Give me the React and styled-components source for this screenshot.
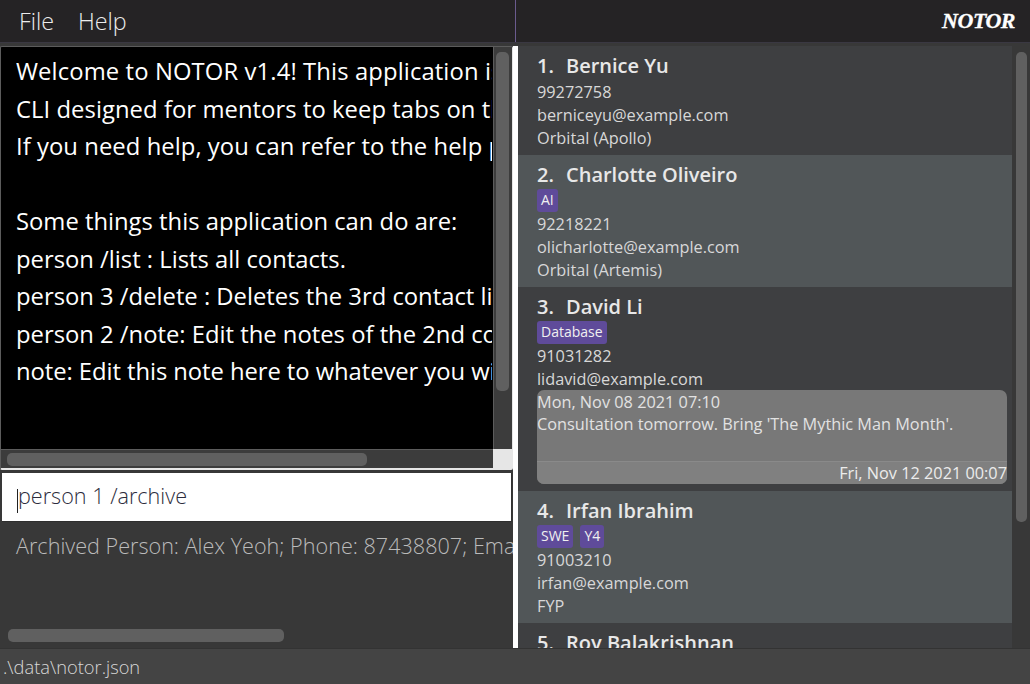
import React from 'react';
import styled, { createGlobalStyle } from 'styled-components';

const GlobalStyle = createGlobalStyle`
	html, body {
		margin: 0;
		padding: 0;
		background: #383838;
	}
`;

const persons = [
	{ index: '1.', name: 'Bernice Yu', phone: '99272758', email: 'berniceyu@example.com', group: 'Orbital (Apollo)', height: 109 },
	{ index: '2.', name: 'Charlotte Oliveiro', tags: ['AI'], phone: '92218221', email: 'olicharlotte@example.com', group: 'Orbital (Artemis)', height: 132 },
	{
		index: '3.', name: 'David Li', tags: ['Database'], phone: '91031282', email: 'lidavid@example.com', height: 204,
		note: { date: 'Mon, Nov 08 2021 07:10', text: "Consultation tomorrow. Bring 'The Mythic Man Month'.", updated: 'Fri, Nov 12 2021 00:07' }
	},
	{ index: '4.', name: 'Irfan Ibrahim', tags: ['SWE', 'Y4'], phone: '91003210', email: 'irfan@example.com', group: 'FYP', height: 132 },
	{ index: '5.', name: 'Roy Balakrishnan', height: 40 }
];

// spacing nudges each line so it gets clipped at the same letter as the reference
const welcome = [
	{ text: 'Welcome to NOTOR v1.4! This application is a CLI designed for mentors to keep tabs on their mentees.', spacing: 0.12 },
	{ text: 'CLI designed for mentors to keep tabs on their mentees and their progress in one application.', spacing: 0.06 },
	{ text: 'If you need help, you can refer to the help page by typing help into the command box.', spacing: 0.06 },
	{ text: '\u00a0' },
	{ text: 'Some things this application can do are:' },
	{ text: 'person /list : Lists all contacts.' },
	{ text: 'person 3 /delete : Deletes the 3rd contact listed in the application.' },
	{ text: 'person 2 /note: Edit the notes of the 2nd contact listed in the application.' },
	{ text: 'note: Edit this note here to whatever you wish to remember for yourself.', spacing: -0.06 }
];

function App() {
	return (
		<Page>
			<GlobalStyle />
			<TopBar>
				<Menu>
					<MenuItem>File</MenuItem>
					<MenuItem>Help</MenuItem>
				</Menu>
				<Brand>NOTOR</Brand>
			</TopBar>
			<Main>
				<LeftPane>
					<OutputBox>
						<OutputText>
							{welcome.map((line, i) => <OutputLine key={i} $spacing={line.spacing || 0}>{line.text}</OutputLine>)}
						</OutputText>
						<VTrack><VThumb $height={339} /></VTrack>
						<HTrack><HThumb $width={360} /></HTrack>
						<Corner />
					</OutputBox>
					<CommandBox>
						<Caret />
						<CommandText>person 1 /archive</CommandText>
					</CommandBox>
					<ResultBox>
						<ResultText>Archived Person: Alex Yeoh; Phone: 87438807; Email: alexyeoh@example.com</ResultText>
						<ResultThumb />
					</ResultBox>
				</LeftPane>
				<Splitter />
				<ListPane>
					<List>
						{persons.map((p, i) => (
							<Card key={p.name} $alt={i % 2 === 1} $height={p.height}>
								<Name><Index>{p.index}</Index>{p.name}</Name>
								{p.tags ? (
									<Tags>
										{p.tags.map(t => <Tag key={t}>{t}</Tag>)}
									</Tags>
								) : <NoTags />}
								{p.phone && <Field>{p.phone}</Field>}
								{p.email && <Field>{p.email}</Field>}
								{p.group && <Field>{p.group}</Field>}
								{p.note && (
									<Note>
										<NoteBody>
											<NoteLine>{p.note.date}</NoteLine>
											<NoteLine>{p.note.text}</NoteLine>
										</NoteBody>
										<NoteFooter>{p.note.updated}</NoteFooter>
									</Note>
								)}
							</Card>
						))}
					</List>
					<ListScroll><ListThumb /></ListScroll>
				</ListPane>
			</Main>
			<StatusBar>.\data\notor.json</StatusBar>
		</Page>
	);
}

const Page = styled.div`
	width: 1030px;
	height: 684px;
	display: flex;
	flex-direction: column;
	overflow: hidden;
	background: #383838;
	font-family: "Open Sans", "Noto Sans", sans-serif;
`;

const TopBar = styled.div`
	height: 43px;
	flex: none;
	display: flex;
	align-items: center;
	justify-content: space-between;
	background: #252325;
	box-sizing: border-box;
	border-bottom: 1px solid #3a3842;
	position: relative;

	&::after {
		content: '';
		position: absolute;
		left: 515px;
		top: 0;
		bottom: 0;
		width: 1px;
		background: #6b5b8e;
	}
`;

const Menu = styled.div`
	display: flex;
	gap: 24px;
	padding-left: 19px;
`;

const MenuItem = styled.span`
	color: #ececec;
	font-size: 23.3px;
	font-weight: 300;
`;

const Brand = styled.span`
	margin-right: 15px;
	color: #fff;
	font-family: "Liberation Serif", serif;
	font-style: italic;
	font-weight: 700;
	font-size: 22px;
	letter-spacing: -0.5px;
	-webkit-text-stroke: 0.3px #fff;
`;

const Main = styled.div`
	flex: 1;
	min-height: 0;
	display: flex;
	background: #383838;
	padding-top: 3px;
`;

const LeftPane = styled.div`
	width: 513px;
	flex: none;
	display: flex;
	flex-direction: column;
`;

const OutputBox = styled.div`
	height: 424px;
	flex: none;
	box-sizing: border-box;
	position: relative;
	border-left: 1px solid #5c5c5c;
	border-top: 1px solid #5c5c5c;
	border-bottom: 2px solid #e6e6e6;
	border-right: 1px solid #e6e6e6;
	border-radius: 2px;
	background: #383838;
	overflow: hidden;
`;

const OutputText = styled.div`
	height: 402px;
	width: 492px;
	box-sizing: border-box;
	padding: 6px 0 0 15px;
	background: #000;
	color: #fff;
	font-size: 23.8px;
	line-height: 37.5px;
	white-space: pre;
	overflow: hidden;
`;

const OutputLine = styled.div`
	width: 476px;
	overflow: hidden;
	letter-spacing: ${p => p.$spacing}px;
`;

const VTrack = styled.div`
	position: absolute;
	top: 0;
	right: 0;
	width: 19px;
	height: 402px;
	box-sizing: border-box;
	border-left: 1px solid #5c5c5c;
	background: #3c3c3c;
`;

const VThumb = styled.div`
	margin: 5px 3px 0 2px;
	height: ${p => p.$height}px;
	background: #606060;
	border-radius: 5px;
`;

const HTrack = styled.div`
	position: absolute;
	left: 0;
	bottom: 0;
	width: 492px;
	height: 19px;
	box-sizing: border-box;
	border-top: 1px solid #5c5c5c;
	background: #3c3c3c;
`;

const HThumb = styled.div`
	margin: 3px 6px;
	width: ${p => p.$width}px;
	height: 13px;
	background: #606060;
	border-radius: 5px;
`;

const Corner = styled.div`
	position: absolute;
	right: 0;
	bottom: 0;
	width: 19px;
	height: 19px;
	background: #e6e6e6;
`;

const CommandBox = styled.div`
	height: 49px;
	flex: none;
	margin: 3px 0 0 2px;
	width: 510px;
	box-sizing: border-box;
	display: flex;
	align-items: center;
	padding-left: 15px;
	background: #fff;
	border-right: 1px solid #333;
	border-bottom: 1px solid #2e2e2e;
`;

const CommandText = styled.span`
	margin-bottom: 4px;
	color: #2c2c3c;
	font-size: 21.6px;
	font-weight: 300;
	white-space: pre;
`;

const Caret = styled.span`
	width: 1px;
	height: 24px;
	margin-top: 7px;
	background: #222;
`;

const ResultBox = styled.div`
	flex: 1;
	position: relative;
	background: #383838;
	overflow: hidden;
	padding: 9px 0 0 16px;
`;

const ResultText = styled.div`
	color: #bbb;
	font-size: 21.6px;
	font-weight: 300;
	white-space: pre;
`;

const ResultThumb = styled.div`
	position: absolute;
	left: 8px;
	bottom: 6px;
	width: 276px;
	height: 13px;
	background: #606060;
	border-radius: 5px;
`;

const Splitter = styled.div`
	width: 5px;
	flex: none;
	background: #fff;
`;

const ListPane = styled.div`
	flex: 1;
	min-width: 0;
	display: flex;
	background: #383838;
`;

const List = styled.div`
	width: 494px;
	flex: none;
	overflow: hidden;
`;

const Card = styled.div`
	height: ${p => p.$height}px;
	box-sizing: border-box;
	padding: 7px 0 0 19px;
	background: ${p => (p.$alt ? '#515658' : '#3e3f41')};
	overflow: hidden;
`;

const Name = styled.div`
	display: flex;
	color: #e8e8e8;
	font-size: 20px;
	font-weight: 600;
	line-height: 26px;
	white-space: pre;
`;

const Index = styled.span`
	width: 29px;
`;

const NoTags = styled.div`
	height: 2px;
`;

const Tags = styled.div`
	display: flex;
	gap: 7px;
	margin: 1px 0;
`;

const Tag = styled.span`
	background: #5f4b9a;
	color: #f0f0f0;
	font-size: 14px;
	line-height: 22px;
	padding: 0 4px 1px;
	border-radius: 3px;
`;

const Field = styled.div`
	color: #d8d8d8;
	font-size: 16.3px;
	line-height: 23px;
	white-space: pre;
`;

const Note = styled.div`
	width: 470px;
	height: 94px;
	margin-top: -1px;
	display: flex;
	flex-direction: column;
	background: #787878;
	border-radius: 7px;
	overflow: hidden;
`;

const NoteBody = styled.div`
	flex: 1;
	padding-top: 1px;
`;

const NoteLine = styled.div`
	color: #e2e2e2;
	font-size: 16.3px;
	line-height: 22px;
	white-space: pre;
`;

const NoteFooter = styled.div`
	height: 23px;
	box-sizing: border-box;
	background: #808080;
	border-top: 1px solid #8a8a8a;
	text-align: right;
	color: #ececec;
	font-size: 16.3px;
	line-height: 22px;
`;

const ListScroll = styled.div`
	flex: 1;
	padding: 6px 3px 0 4px;
	background: #383838;
`;

const ListThumb = styled.div`
	height: 470px;
	background: #606060;
	border-radius: 5px;
`;

const StatusBar = styled.div`
	height: 36px;
	flex: none;
	box-sizing: border-box;
	padding-left: 3px;
	background: #444;
	border-top: 1px solid #333;
	color: #d8d8d8;
	font-size: 18.3px;
	font-weight: 300;
	line-height: 35px;
`;

export default App;
